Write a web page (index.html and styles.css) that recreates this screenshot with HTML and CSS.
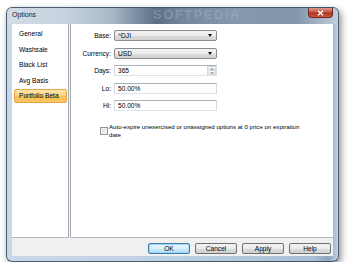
FILE: index.html
```html
<!DOCTYPE html>
<html lang="en">
<head>
<meta charset="utf-8">
<title>Options</title>
<link rel="stylesheet" href="styles.css">
</head>
<body>

<div class="window">
  <div class="titlebar">
    <span class="title">Options</span>
    <span class="watermark">SOFTPEDIA</span>
    <span class="close">
      <svg width="7" height="6" viewBox="0 0 7 6"><path d="M1 0.8 L6 5.2 M6 0.8 L1 5.2" stroke="#fff" stroke-width="1.5" fill="none"/></svg>
    </span>
  </div>

  <div class="client">
    <div class="panes">
      <ul class="nav">
        <li>General</li>
        <li>Washsale</li>
        <li>Black List</li>
        <li>Avg Basis</li>
        <li class="active">Portfolio Beta</li>
      </ul>

      <div class="content">
        <div class="form">
          <label>Base:</label>
          <div class="combo"><span>^DJI</span><i class="arrow"></i></div>

          <label>Currency:</label>
          <div class="combo"><span>USD</span><i class="arrow"></i></div>

          <label>Days:</label>
          <div class="textbox spin">
            <span>365</span>
            <span class="spin-btns"><i class="up"></i><i class="down"></i></span>
          </div>

          <label>Lo:</label>
          <div class="textbox"><span>50.00%</span></div>

          <label>Hi:</label>
          <div class="textbox"><span>50.00%</span></div>
        </div>

        <div class="check-row">
          <span class="checkbox"></span>
          <span class="check-text">Auto-expire unexercised or unassigned options at 0 price on expiration date</span>
        </div>
      </div>
    </div>

    <div class="buttons">
      <button class="btn default">OK</button>
      <button class="btn">Cancel</button>
      <button class="btn">Apply</button>
      <button class="btn">Help</button>
    </div>
  </div>
</div>

</body>
</html>
```

FILE: styles.css
```css
html,body{margin:0;padding:0;background:#fff;}
body{font-family:"Liberation Sans",Arial,sans-serif;font-size:6.6px;color:#000;}

/* window frame */
.window{box-sizing:border-box;width:333px;height:255px;margin:7px 0 0 6px;padding:0 5px 5px;border:1px solid rgba(45,60,80,.8);border-radius:6px;background:linear-gradient(to right,#c9d8e8 0,#bdd0e3 50%,#a9bed3 93%,#8ea4bb 97%,#c3d0dd 100%);box-shadow:2px 3px 7px rgba(0,0,0,.45);display:flex;flex-direction:column;}
.titlebar{position:relative;height:16px;margin:0 -5px;padding:0 5px;display:flex;align-items:flex-start;border-radius:5px 5px 0 0;overflow:hidden;background:linear-gradient(to right,#d2dce7 0,#c6d2de 60px,#a9b8c8 105px,#7e90a4 128px,#5d6f84 150px,#74869a 175px,#8698ab 230px,#8395a9 290px,#9aabbc 305px,#c2cfdb 100%);}
.title{line-height:14px;font-size:7px;color:#1a1a1a;}
.watermark{position:absolute;left:146px;top:0;font-size:13px;line-height:14px;font-weight:bold;letter-spacing:1.5px;color:rgba(170,186,202,.4);}
.close{position:relative;margin-left:auto;width:25px;height:10px;box-sizing:border-box;border:1px solid #6e2a22;border-top:none;border-radius:0 0 4px 4px;background:linear-gradient(#dc9a90 0,#c9584a 45%,#b0301f 55%,#c85a48 100%);display:flex;align-items:center;justify-content:center;}

/* client area */
.client{flex:1;display:flex;flex-direction:column;background:#f0f0f0;}
.panes{height:214px;display:flex;}
.nav{list-style:none;margin:0;padding:3px 0 0;width:56px;background:#fff;border-right:1px solid #a7adb5;border-bottom:1px solid #b5b9be;}
.nav li{margin:0 1px 1.5px 2px;padding-left:5px;line-height:14px;white-space:nowrap;}
.nav li.active{line-height:12px;padding-left:4px;border:1px solid #e3a448;border-radius:2px;background:linear-gradient(#fde7ad 0,#fbd17a 50%,#f8bf55 51%,#f9c865 100%);}

.content{flex:1;margin-left:1px;padding-top:6px;background:#fff;border-left:1px solid #a7adb5;border-bottom:1px solid #b5b9be;}
.form{display:grid;grid-template-columns:40px 103px;grid-auto-rows:11px;column-gap:3px;row-gap:6.5px;}
.form label{text-align:right;line-height:11px;}

.combo{box-sizing:border-box;display:flex;align-items:center;padding-left:3px;border:1px solid #8a8c8e;border-radius:2px;background:linear-gradient(#f4f4f4 0,#ebebeb 50%,#dedede 51%,#d2d2d2 100%);}
.arrow{margin-left:auto;margin-right:4px;width:0;height:0;border-top:3px solid #111;border-left:2.5px solid transparent;border-right:2.5px solid transparent;}

.textbox{box-sizing:border-box;display:flex;align-items:center;padding-left:3px;background:#fff;border:1px solid;border-color:#a9b2bd #d3dbe4 #dde4ec #d3dbe4;}
.spin-btns{margin-left:auto;width:9px;height:9px;display:flex;flex-direction:column;}
.spin-btns i{flex:1;display:flex;align-items:center;justify-content:center;background:linear-gradient(#f6f6f6,#e4e4e4);border:1px solid #d6d9dd;margin-top:-1px;}
.spin-btns i:first-child{margin-top:0;}
.spin-btns .up::before{content:"";border-bottom:2px solid #9aa0a6;border-left:2px solid transparent;border-right:2px solid transparent;}
.spin-btns .down::before{content:"";border-top:2px solid #9aa0a6;border-left:2px solid transparent;border-right:2px solid transparent;}

.check-row{display:flex;align-items:flex-start;margin:12px 0 0 29px;}
.checkbox{box-sizing:border-box;width:8px;height:8px;margin-top:4px;border:1px solid #8f9499;background:linear-gradient(135deg,#dcdcdc,#f8f8f8);box-shadow:inset 0 0 0 1px #f2f2f2;}
.check-text{width:196px;margin-left:1px;font-size:6.1px;line-height:7.5px;}

/* bottom buttons */
.buttons{flex:1;display:flex;justify-content:flex-end;align-items:flex-start;gap:5px;padding:5px 2px 0 0;}
.btn{box-sizing:border-box;width:42px;height:11px;padding:0;font-family:inherit;font-size:6.6px;line-height:9px;color:#000;border:1px solid #707070;border-radius:2px;background:linear-gradient(#f3f3f3 0,#ebebeb 50%,#dddddd 51%,#cfcfcf 100%);}
.btn.default{border-color:#3c7fb1;background:linear-gradient(#eaf6fd 0,#d9f0fc 50%,#c6e7fb 51%,#b7def6 100%);box-shadow:inset 0 0 0 1px #9fd5f4;}
```
